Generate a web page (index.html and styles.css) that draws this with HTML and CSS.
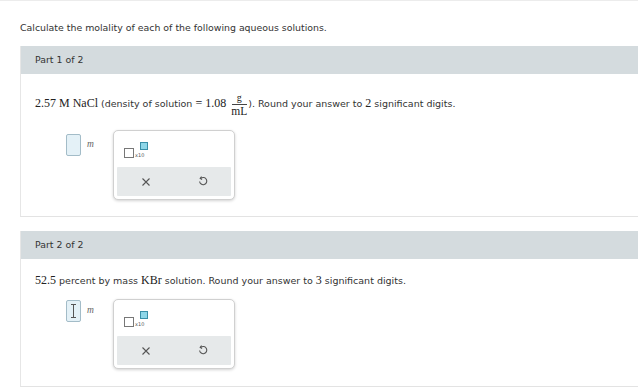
FILE: index.html
```html
<!DOCTYPE html>
<html>
<head>
<meta charset="utf-8">
<link rel="stylesheet" href="styles.css">
</head>
<body>
<div class="page">
  <p class="intro">Calculate the molality of each of the following aqueous solutions.</p>

  <section class="part part-1">
    <div class="part-head">Part 1 of 2</div>
    <div class="part-body">
      <p class="q"><span class="math">2.57 M NaCl</span> (density of solution <span class="math">= 1.08</span> <span class="frac"><span class="num">g</span><span class="den">mL</span></span>). Round your answer to <span class="math">2</span> significant digits.</p>
      <div class="answer-row">
        <div class="entry"><span class="box"></span><span class="unit">m</span></div>
        <div class="palette">
          <div class="pal-top">
            <span class="sci"><span class="sq"></span><span class="x10">x10</span><span class="sup"></span></span>
          </div>
          <div class="pal-actions">
            <span class="btn">
              <svg width="10" height="10" viewBox="0 0 10 10"><path d="M1.5 1.5 L8.5 8.5 M8.5 1.5 L1.5 8.5" stroke="#555" stroke-width="1.1" fill="none"/></svg>
            </span>
            <span class="btn">
              <svg width="10" height="11" viewBox="0 0 10 11"><path d="M3 2.2 A3.6 3.6 0 1 1 1.6 5.5" stroke="#555" stroke-width="1.1" fill="none"/><path d="M3.6 0.6 L2.2 2.3 L4 3.6" stroke="#555" stroke-width="1.1" fill="none"/></svg>
            </span>
          </div>
        </div>
      </div>
    </div>
  </section>

  <section class="part part-2">
    <div class="part-head">Part 2 of 2</div>
    <div class="part-body">
      <p class="q"><span class="math">52.5</span> percent by mass <span class="math">KBr</span> solution. Round your answer to <span class="math">3</span> significant digits.</p>
      <div class="answer-row">
        <div class="entry"><span class="box active"><span class="caret"></span></span><span class="unit">m</span></div>
        <div class="palette">
          <div class="pal-top">
            <span class="sci"><span class="sq"></span><span class="x10">x10</span><span class="sup"></span></span>
          </div>
          <div class="pal-actions">
            <span class="btn">
              <svg width="10" height="10" viewBox="0 0 10 10"><path d="M1.5 1.5 L8.5 8.5 M8.5 1.5 L1.5 8.5" stroke="#555" stroke-width="1.1" fill="none"/></svg>
            </span>
            <span class="btn">
              <svg width="10" height="11" viewBox="0 0 10 11"><path d="M3 2.2 A3.6 3.6 0 1 1 1.6 5.5" stroke="#555" stroke-width="1.1" fill="none"/><path d="M3.6 0.6 L2.2 2.3 L4 3.6" stroke="#555" stroke-width="1.1" fill="none"/></svg>
            </span>
          </div>
        </div>
      </div>
    </div>
  </section>
</div>
</body>
</html>
```

FILE: styles.css
```css
html, body {
  margin: 0;
  padding: 0;
  background: #fff;
  overflow: hidden;
}
body {
  font-family: "DejaVu Sans", Verdana, sans-serif;
  font-size: 9.4px;
  color: #333;
}
.page {
  border-top: 1px solid #ececec;
  padding: 0 0 0 20px;
  width: 640px;
  box-sizing: border-box;
}
.intro {
  margin: 0;
  padding-top: 21px;
  height: 24px;
  line-height: 12px;
  color: #333;
}
.part {
  border-left: 1px solid #e6e6e6;
  border-bottom: 1px solid #e3e3e3;
  margin-right: -20px;
}
.part-2 {
  margin-top: 14px;
}
.part-head {
  background: #d4dbde;
  height: 28px;
  line-height: 28px;
  padding-left: 14px;
  color: #333;
}
.part-body {
  padding-left: 14px;
}
.part-1 .part-body {
  padding-top: 22px;
  padding-bottom: 16px;
}
.part-2 .part-body {
  padding-top: 14px;
  padding-bottom: 17px;
}
.q {
  margin: 0;
  line-height: 14px;
  color: #333;
  font-size: 9.5px;
}
.math {
  font-family: "Liberation Serif", "Times New Roman", serif;
  font-size: 12px;
  color: #222;
}
.frac {
  display: inline-flex;
  flex-direction: column;
  align-items: center;
  vertical-align: middle;
  font-family: "Liberation Serif", serif;
  color: #222;
  margin: -8px 1px -8px 2px;
  line-height: 11px;
}
.frac .num {
  border-bottom: 1px solid #444;
  padding: 0 5px 1px;
  font-size: 10px;
}
.frac .den {
  padding-top: 1px;
  font-size: 11.5px;
}
.part-1 .answer-row {
  margin-top: 19px;
}
.part-2 .answer-row {
  margin-top: 11px;
}
.answer-row {
  display: flex;
  align-items: flex-start;
  padding-left: 31px;
}
.entry {
  display: flex;
  align-items: flex-start;
  width: 47px;
  margin-top: 4px;
}
.part-2 .entry {
  margin-top: 1px;
}
.box {
  position: relative;
  display: block;
  width: 13px;
  height: 20px;
  background: #e4f1f7;
  border: 1px solid #a3bcc8;
  border-radius: 2px;
}
.caret {
  position: absolute;
  left: 6px;
  top: 3px;
  width: 1px;
  height: 14px;
  background: #555;
}
.caret::before, .caret::after {
  content: "";
  position: absolute;
  left: -2px;
  width: 5px;
  height: 1px;
  background: #555;
}
.caret::before { top: 0; }
.caret::after { bottom: 0; }
.unit {
  font-family: "Liberation Serif", serif;
  font-style: italic;
  font-size: 9.5px;
  color: #666;
  margin-left: 6px;
  margin-top: 5px;
}
.palette {
  width: 114px;
  border: 1px solid #d0d0d0;
  border-radius: 5px;
  box-shadow: 0 1px 3px rgba(0,0,0,0.18);
  background: #fff;
  display: flex;
  flex-direction: column;
  padding: 0 3px 3px;
}
.pal-top {
  height: 36px;
  display: flex;
  align-items: center;
  padding-left: 7px;
}
.sci {
  position: relative;
  display: inline-flex;
  align-items: flex-end;
  width: 26px;
  height: 16px;
  margin-top: 2px;
}
.sq {
  width: 8px;
  height: 8px;
  border: 1px solid #777;
  display: block;
}
.x10 {
  font-size: 5px;
  color: #555;
  line-height: 5px;
  margin-left: 1px;
}
.sup {
  position: absolute;
  left: 16px;
  top: 0;
  width: 6px;
  height: 6px;
  background: #8ed6e8;
  border: 1px solid #3a8fa8;
}
.pal-actions {
  height: 29px;
  background: #e6e9ea;
  display: flex;
  align-items: center;
  border-radius: 1px;
}
.btn {
  flex: 1;
  display: flex;
  justify-content: center;
  align-items: center;
}
.btn svg { display: block; }
```
